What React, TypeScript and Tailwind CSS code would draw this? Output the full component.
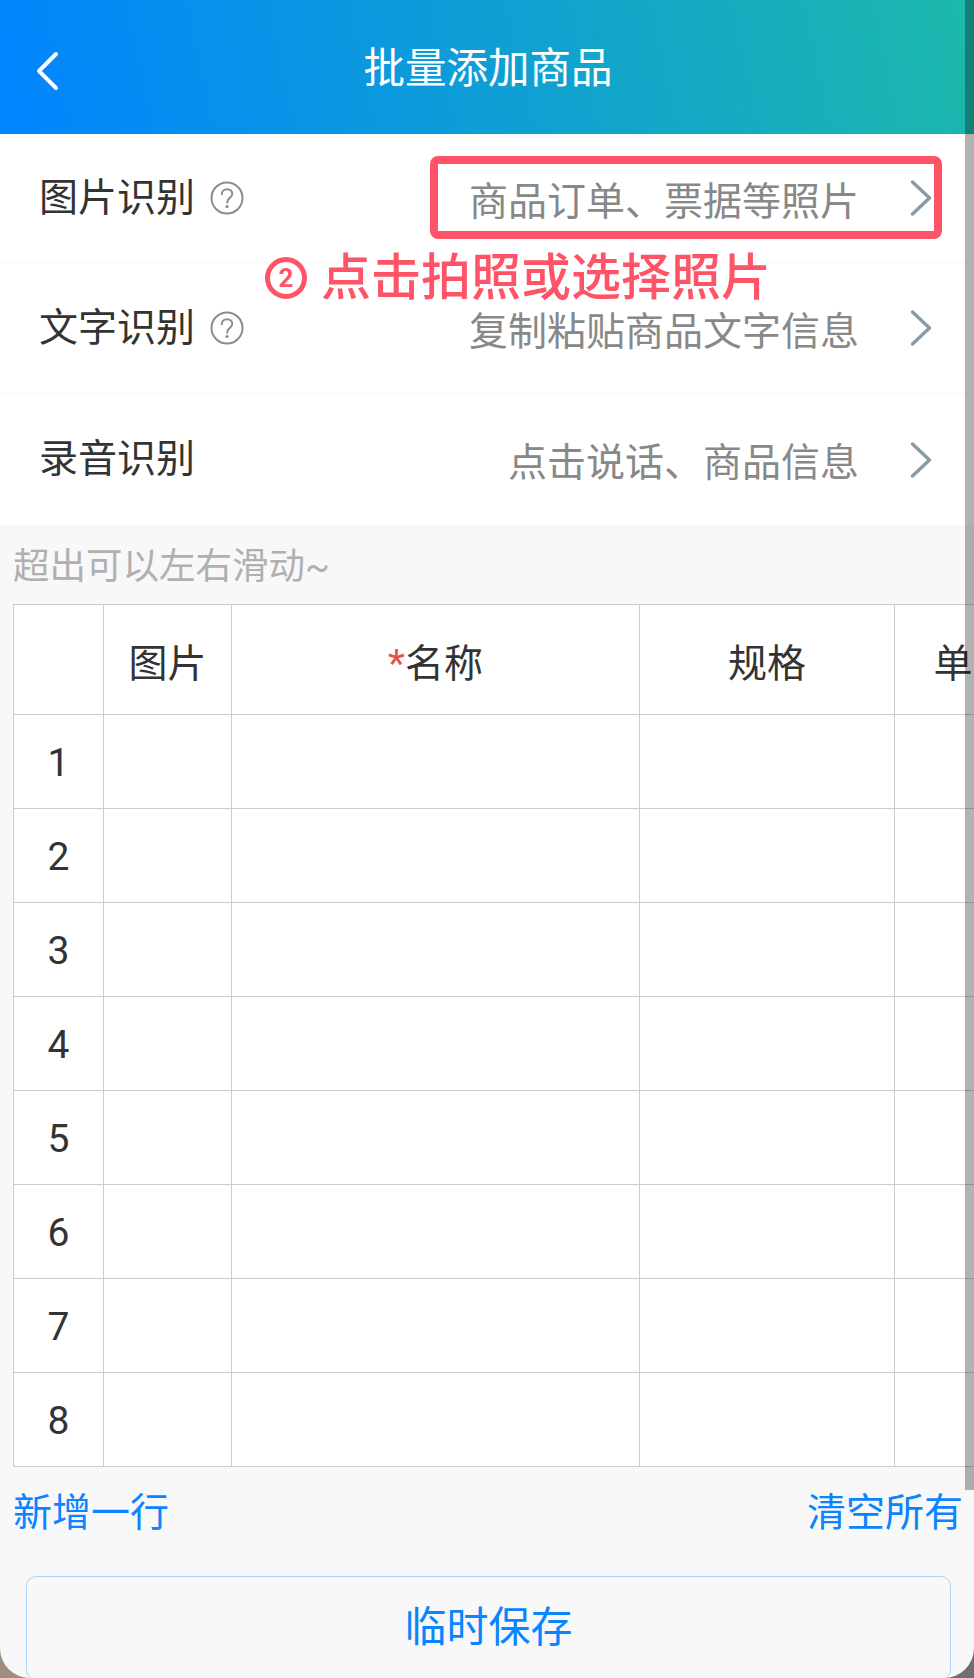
const rowNumbers = [1, 2, 3, 4, 5, 6, 7, 8];

function HelpIcon() {
  return (
    <svg width="34" height="34" viewBox="0 0 34 34" fill="none" className="ml-[15px]">
      <circle cx="17" cy="17" r="15.5" stroke="#8c8c8c" strokeWidth="2" />
      <path
        d="M11.8 13.2c0-3 2.3-5 5.3-5s5.2 1.9 5.2 4.6c0 2-1.1 3.1-2.7 4.3-1.500 1.100-2.300 2-2.300 3.900v0.700"
        stroke="#8c8c8c"
        strokeWidth="2"
        strokeLinecap="round"
      />
      <circle cx="17" cy="25.500" r="1.600" fill="#8c8c8c" />
    </svg>
  );
}

function RecognizeRow({
  label,
  hint,
  help,
  first,
  last,
}: {
  label: string;
  hint: string;
  help?: boolean;
  first?: boolean;
  last?: boolean;
}) {
  return (
    <div
      className={`flex items-center pl-[39px] pr-[41px] ${first ? "h-[129px]" : "h-[131px]"} ${last ? "" : "border-b border-[#f7f7f7]"}`}
    >
      <span className="text-[39px] leading-none text-[#333333]">{label}</span>
      {help && <HelpIcon />}
      <span className="ml-auto pt-[8px] text-[39px] leading-none text-[#888888]">{hint}</span>
      <svg width="24" height="38" viewBox="0 0 24 38" fill="none" className="ml-[50px]">
        <path
          d="M3.500 3l17 16-17 16"
          stroke="#8a9ba8"
          strokeWidth="3.500"
          strokeLinecap="round"
          strokeLinejoin="round"
        />
      </svg>
    </div>
  );
}

export default function App() {
  return (
    <div
      className="relative h-[1678px] w-[974px] overflow-hidden bg-gradient-to-r from-[#9c8e80] to-[#6f6f6f]"
      style={{ fontFamily: '"Roboto", "Noto Sans CJK SC", sans-serif' }}
    >
      <div className="h-full overflow-hidden rounded-b-[30px] bg-[#f8f8f8]">
        {/* Header */}
        <div className="relative flex h-[134px] items-center justify-center bg-[linear-gradient(78deg,#0184ff,#1cb9ab)] pl-[2px] pt-[4px]">
          <svg
            width="28"
            height="42"
            viewBox="0 0 28 42"
            fill="none"
            className="absolute left-[33px] top-[50px]"
          >
            <path
              d="M23 4L6 21l17 17"
              stroke="#ffffff"
              strokeWidth="4"
              strokeLinecap="round"
              strokeLinejoin="round"
            />
          </svg>
          <h1 className="text-[41.500px] leading-none text-white">批量添加商品</h1>
        </div>

        {/* Recognize options */}
        <div className="bg-white">
          <RecognizeRow label="图片识别" hint="商品订单、票据等照片" help first />
          <RecognizeRow label="文字识别" hint="复制粘贴商品文字信息" help />
          <RecognizeRow label="录音识别" hint="点击说话、商品信息" last />
        </div>

        <p className="flex h-[79px] items-center pl-[13px] pt-[6px] text-[36.500px] leading-none text-[#b0b0b0]">
          超出可以左右滑动~
        </p>

        {/* Table */}
        <div className="ml-[13px] overflow-hidden">
          <table className="w-[1037px] table-fixed border-collapse bg-white text-center text-[39px] text-[#333333]">
            <colgroup>
              <col className="w-[90px]" />
              <col className="w-[128px]" />
              <col className="w-[408px]" />
              <col className="w-[255px]" />
              <col className="w-[156px]" />
            </colgroup>
            <thead>
              <tr className="h-[110px]">
                <th className="border border-[#cccccc] font-normal"></th>
                <th className="border border-[#cccccc] pt-[10px] font-normal">图片</th>
                <th className="border border-[#cccccc] pt-[10px] font-normal">
                  <span className="text-[#e8504a]">*</span>名称
                </th>
                <th className="border border-[#cccccc] pt-[10px] font-normal">规格</th>
                <th className="border border-[#cccccc] pt-[10px] font-normal">单价</th>
              </tr>
            </thead>
            <tbody>
              {rowNumbers.map((n) => (
                <tr key={n} className="h-[94px]">
                  <td className="border border-[#cccccc] pt-[4px]">{n}</td>
                  <td className="border border-[#cccccc]"></td>
                  <td className="border border-[#cccccc]"></td>
                  <td className="border border-[#cccccc]"></td>
                  <td className="border border-[#cccccc]"></td>
                </tr>
              ))}
            </tbody>
          </table>
        </div>

        {/* Table actions */}
        <div className="flex h-[92px] items-center justify-between pl-[13px] pr-[11px] text-[39px] leading-none text-[#0a84ff]">
          <span>新增一行</span>
          <span>清空所有</span>
        </div>

        <div className="ml-[26px] mr-[23px] mt-[17px] flex h-[104px] items-center justify-center rounded-[10px] border border-[#a9d4ff] text-[42px] leading-none text-[#0a84ff]">
          临时保存
        </div>
      </div>

      {/* Tutorial annotation */}
      <div className="absolute left-[430px] top-[156px] h-[83px] w-[512px] rounded-[8px] border-[8px] border-[#ff5468]" />
      <div className="absolute left-[265px] top-[246px] flex items-center text-[50px] font-medium leading-[64px] text-[#ff5468]">
        <span className="mr-[14px] flex h-[42px] w-[42px] items-center justify-center rounded-full border-[5px] border-[#ff5468] text-[26px] font-bold leading-none">
          2
        </span>
        点击拍照或选择照片
      </div>

      {/* Scrollbar */}
      <div className="absolute right-0 top-0 h-[1490px] w-[9px] bg-black/30" />
    </div>
  );
}
